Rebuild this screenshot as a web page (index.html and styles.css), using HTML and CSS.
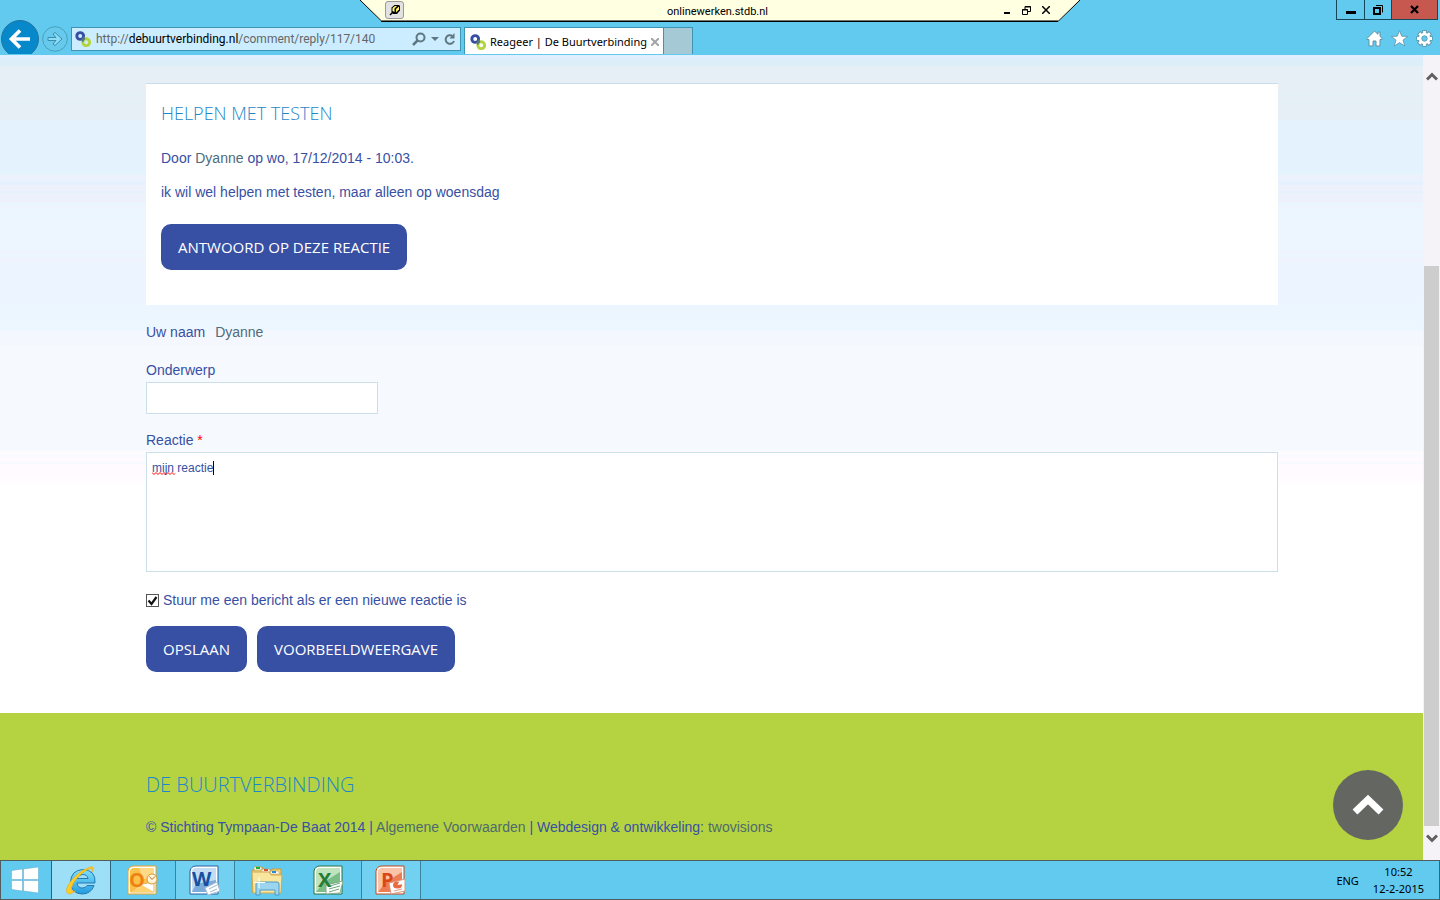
FILE: index.html
```html
<!DOCTYPE html>
<html lang="nl">
<head>
<meta charset="utf-8">
<title>Reageer | De Buurtverbinding</title>
<link rel="stylesheet" href="styles.css">
</head>
<body>
<svg class="defs" aria-hidden="true">
  <symbol id="rings" viewBox="0 0 16 16">
    <circle cx="5.2" cy="5" r="3.4" fill="none" stroke="#354ea4" stroke-width="2.9"/>
    <circle cx="11.2" cy="11.2" r="3.4" fill="none" stroke="#b4d340" stroke-width="2.9"/>
    <path d="M6.7 8.2Q8.8 7.5 8.6 5.5L10 8Q8 8.7 7.8 10.8Z" fill="#567579" stroke="#567579"/>
  </symbol>
</svg>
<div class="desktop">
  <header class="browser">
    <div class="title-row">
      <div class="window-buttons">
        <button class="win" aria-label="Minimaliseren"><svg width="12" height="12"><path d="M1 7h10v3H1z"/></svg></button>
        <button class="win" aria-label="Verkleinen"><svg width="12" height="12"><path d="M2 4h6v6H2z" fill="none" stroke="#000" stroke-width="2"/><path d="M4 1.500h6.500v7" fill="none" stroke="#000"/></svg></button>
        <button class="win win-close" aria-label="Sluiten"><svg width="12" height="12"><path d="M2 2l7 7M9 2l-7 7" stroke="#000" stroke-width="2.300"/></svg></button>
      </div>
    </div>
    <div class="nav-row">
      <button class="back" aria-label="Terug"><svg width="38" height="38" viewBox="0 0 38 38"><circle cx="19" cy="19" r="18.500" fill="#0788cb" stroke="#24739c"/><path d="M29 19H11M19 10.500L10.500 19l8.500 8.500" fill="none" stroke="#fff" stroke-width="3.700"/></svg></button>
      <button class="forward" aria-label="Vooruit"><svg width="26" height="26" viewBox="0 0 26 26"><circle cx="13" cy="13" r="12.300" fill="#67c9eb" stroke="#4a9fbd"/><path d="M6 11.500h8l-3-3.500 2-1.500 7 6.500-7 6.500-2-1.500 3-3.500H6z" fill="#8cdcf5" stroke="#368fb0"/></svg></button>
      <div class="address">
        <svg width="16" height="16"><use href="#rings"/></svg>
        <div class="url" role="textbox" aria-label="Adres">http://<span class="host">debuurtverbinding.nl</span>/comment/reply/117/140</div>
        <button class="tool" aria-label="Zoeken"><svg width="14" height="14"><circle cx="8.500" cy="5.500" r="4" fill="none" stroke="#5f7780" stroke-width="2"/><path d="M5.500 8.500L1 13" stroke="#5f7780" stroke-width="2.500"/></svg></button>
        <button class="tool" aria-label="Adreslijst"><svg width="8" height="5"><path d="M0 0h8L4 4z" fill="#5f7780"/></svg></button>
        <button class="tool" aria-label="Vernieuwen"><svg width="12" height="13"><path d="M8.500 3A4.300 4.300 0 1 0 10 8" fill="none" stroke="#5f7780" stroke-width="2"/><path d="M10.500 0v5.500H5.500z" fill="#5f7780"/></svg></button>
      </div>
      <div class="tab">
        <svg width="16" height="16"><use href="#rings"/></svg>
        <span class="tab-title">Reageer | De Buurtverbinding</span>
        <button class="tool" aria-label="Tabblad sluiten"><svg width="8" height="8"><path d="M0 0l8 8M8 0L0 8" stroke="#a4a4a4" stroke-width="2"/></svg></button>
      </div>
      <button class="new-tab" aria-label="Nieuw tabblad"></button>
      <div class="browser-tools">
        <button class="tool" aria-label="Startpagina"><svg width="17" height="17"><path d="M8.500 1L1 8.500v1h2V16h4v-5h3v5h4V9.500h2v-1L14 6V2h-2v2.300z" fill="#fff" stroke="#5f92a5"/></svg></button>
        <button class="tool" aria-label="Favorieten"><svg width="17" height="17"><path d="M8.500 .500l2.200 5.700 6 .200-4.700 3.700 1.700 5.900-5.200-3.400L3.300 16 5 10.100.3 6.400l6-.2z" fill="#fff" stroke="#5f92a5" stroke-width=".8"/></svg></button>
        <button class="tool" aria-label="Extra"><svg width="17" height="17" viewBox="0 0 17 17"><g stroke="#5f92a5" stroke-width="4.400"><path d="M8.500 .300v16.400M.300 8.500h16.400M2.600 2.600l11.800 11.800M14.400 2.600L2.600 14.400"/></g><g stroke="#fff" stroke-width="2.800"><path d="M8.500 1v15M1 8.500h15M3.200 3.200l10.600 10.600M13.800 3.200L3.200 13.800"/></g><circle cx="8.500" cy="8.500" r="4.200" fill="#62caef" stroke="#fff" stroke-width="3"/><circle cx="8.500" cy="8.500" r="2.700" fill="#62caef" stroke="#5f92a5" stroke-width=".8"/></svg></button>
      </div>
    </div>
    <div class="remote">
      <svg class="remote-shape" viewBox="0 0 720 22" preserveAspectRatio="none"><path d="M0 0h720l-21 21H21z" fill="#ffffe1"/><path d="M0 0l21.500 21M698.500 21L720 0" fill="none" stroke="#000"/><path d="M21 20.500h678" stroke="#77776b"/><path d="M21 21.500h677" stroke="#000"/></svg>
      <button class="pin" aria-label="Vastzetten"><svg width="12" height="12"><path d="M2.500 3.500l3-2.500H10l1 1v4.500L8 10H4L2.500 8z" fill="#000"/><path d="M3.500 4l2.500-2h2L5.500 4.500V8l-2-1z" fill="#fffc72"/><path d="M7 5l3-2.500v3L7 8.500z" fill="#fff36a"/><path d="M1 11l3-3" stroke="#000" stroke-width="1.500"/></svg></button>
      <span class="remote-name">onlinewerken.stdb.nl</span>
      <div class="remote-tools">
        <button class="tool" aria-label="Minimaliseer sessie"><svg width="8" height="8"><path d="M1 6h6v2H1z"/></svg></button>
        <button class="tool" aria-label="Herstel sessie"><svg width="9" height="9"><path d="M3 3V.500h5.500v5H6M3 1h6M.500 3.500h5v5h-5zM0 4h6" fill="none" stroke="#000"/></svg></button>
        <button class="tool" aria-label="Sluit sessie"><svg width="8" height="8"><path d="M0 0l8 8M8 0L0 8" stroke="#000" stroke-width="1.500"/></svg></button>
      </div>
    </div>
  </header>

  <div class="viewport">
    <div class="page">
      <main class="content">
        <article class="comment">
          <h2 class="comment-title">Helpen met testen</h2>
          <p class="line">Door <a class="soft" href="#">Dyanne</a> op wo, 17/12/2014 - 10:03.</p>
          <p class="line">ik wil wel helpen met testen, maar alleen op woensdag</p>
          <button class="action">Antwoord op deze reactie</button>
        </article>
        <form class="reply">
          <p class="name"><span>Uw naam</span><a class="soft" href="#">Dyanne</a></p>
          <div class="field">
            <label for="subject">Onderwerp</label>
            <input class="subject" id="subject" type="text">
          </div>
          <div class="field">
            <label for="body">Reactie <span class="required">*</span></label>
            <div class="editor">
              <textarea class="body" id="body" spellcheck="false">mijn reactie</textarea>
              <svg class="squiggle" width="25" height="3"><path d="M0 .500l2 2 2-2 2 2 2-2 2 2 2-2 2 2 2-2 2 2 2-2 2 2 1-1" fill="none" stroke="#f00"/></svg>
              <span class="caret"></span>
            </div>
          </div>
          <label class="notify"><span class="tick"><input class="box" type="checkbox" checked><svg class="mark" width="13" height="13"><path d="M2.500 6.500l3 3.500 5-7" fill="none" stroke="#111" stroke-width="2.200"/></svg></span>Stuur me een bericht als er een nieuwe reactie is</label>
          <div class="actions">
            <button class="action" type="button">Opslaan</button>
            <button class="action" type="button">Voorbeeldweergave</button>
          </div>
        </form>
      </main>
      <footer class="footer">
        <h2 class="footer-title">De Buurtverbinding</h2>
        <p class="line">© Stichting Tympaan-De Baat 2014 | <a class="soft" href="#">Algemene Voorwaarden</a> | Webdesign &amp; ontwikkeling: <a class="soft" href="#">twovisions</a></p>
        <button class="to-top" aria-label="Naar boven"><svg width="32" height="22"><path d="M3 18L16 5.500 29 18" fill="none" stroke="#fff" stroke-width="7"/></svg></button>
      </footer>
    </div>
    <div class="scrollbar">
      <button class="tool" aria-label="Omhoog"><svg width="12" height="10"><path d="M1 8.500l5-5 5 5" fill="none" stroke="#606060" stroke-width="3"/></svg></button>
      <div class="track"><div class="thumb"></div></div>
      <button class="tool" aria-label="Omlaag"><svg width="12" height="10"><path d="M1 1.500l5 5 5-5" fill="none" stroke="#606060" stroke-width="3"/></svg></button>
    </div>
  </div>

  <nav class="taskbar">
    <button class="start" aria-label="Start"><svg width="28" height="28"><path d="M.500 4.500L11.500 3v10.500H.500zM12.500 3L27.500 1v12.500h-15zM.500 14.500h11V25L.500 23.500zM12.500 14.500h15V27l-15-2z" fill="#fff" stroke="#58a9c9" stroke-width=".5"/></svg></button>
    <button class="app app-active" aria-label="Internet Explorer"><svg width="32" height="32"><defs><linearGradient id="ie" x2="0" y2="1"><stop stop-color="#83e0fa"/><stop offset="1" stop-color="#229bdd"/></linearGradient></defs><path d="M30 19H12q.500 5 5.500 5 3 0 4.500-2.500h7Q26 30 17 30 6 29.500 5.500 18 6 6.500 17.500 5.500 31 6 30 19zM12 14.500h11Q22.500 10.500 17.500 10.500q-4.500 0-5.500 4z" fill="url(#ie)" stroke="#2479b5"/><path d="M27 8c3-6 0-6-4-4C12 8 2 20 1.500 26c0 6 5 4 9 1-5 1-5-2-2-8C13 12 20 6 26 4.500q2 0 1 3.500z" fill="#ffcb26" stroke="#e6a817" stroke-width=".6"/></svg></button>
    <button class="app" aria-label="Outlook"><svg width="32" height="32" viewBox="1 0 32 32"><path d="M2 7q1-5 6-5h22v28H2z" fill="#fff" stroke="#e9a21e"/><path d="M4 8q0-4 4-4h20v24H4z" fill="#fcc14a"/><path d="M13 4h15v10L17 15z" fill="#ffda86"/><path d="M5 28l11-8 12-2v10z" fill="#fff" stroke="#edb44c"/><path d="M5 28l11-7 12 7z" fill="#ffd270"/><text x="3" y="23" class="letter letter-o">O</text><circle cx="26" cy="15" r="5" fill="#fff5dc" stroke="#d59735"/><path d="M23.500 12.500l2.500 3 3-3" fill="none" stroke="#b57423"/></svg></button>
    <button class="app app-open" aria-label="Word"><svg width="32" height="32" viewBox="1 0 32 32"><path d="M2 7q1-5 6-5h22v28H2z" fill="#fff" stroke="#2b5fa2"/><path d="M4 8q0-4 4-4h20v24H4z" fill="#c2dcf3"/><path d="M4 28l4-8 20-4v12z" fill="#7babda"/><path d="M17 24l12-6 3 9-12 4z" fill="#fff" stroke="#a8bdd1"/><path d="M21 25l8-4M22 28l7-3" stroke="#9bb6d2"/><text x="4" y="22" class="letter letter-w">W</text></svg></button>
    <button class="app" aria-label="Verkenner"><svg width="34" height="32"><path d="M2 28V6h3V3h7l2 3h8V5h9v23z" fill="#f0d37a" stroke="#c69c42"/><path d="M4 6V3h7l2 3zM11 8V5h8l2 3zM20 10V7h8l2 3z" fill="#fff" stroke="#b99a55" stroke-width=".6"/><path d="M6 3h4v2H6z" fill="#15b535"/><path d="M14 5h4v2h-4z" fill="#e04e2b"/><path d="M22 7h4v2h-4z" fill="#268bd9"/><path d="M2 8h17l2 3h11l-1 18H3z" fill="#f9e69e" stroke="#d1a94f"/><path d="M6 31V20q0-2 2-2h19q2 0 2 2v11h-4v-5H10v5z" fill="#9cd5ef" stroke="#4e9cc5"/><path d="M9 13v11M4 18.500h11" stroke="#fff"/></svg></button>
    <button class="app" aria-label="Excel"><svg width="32" height="32" viewBox="1 0 32 32"><path d="M2 7q1-5 6-5h22v28H2z" fill="#fff" stroke="#24743e"/><path d="M4 8q0-4 4-4h20v24H4z" fill="#bfe3bd"/><path d="M4 28l8-10L28 8v20z" fill="#7abd85"/><path d="M14 21l17-4-3 12-14 1z" fill="#fff" stroke="#81aa87"/><path d="M18 22l10-3M17 25l11-3M17 28l10-3" stroke="#6ca878"/><text x="6" y="23" class="letter letter-x">X</text></svg></button>
    <button class="app app-open" aria-label="PowerPoint"><svg width="32" height="32" viewBox="1 0 32 32"><path d="M2 7q1-5 6-5h22v28H2z" fill="#fff" stroke="#c54519"/><path d="M4 8q0-4 4-4h20v24H4z" fill="#f9c3aa"/><path d="M4 28l8-10L28 8v20z" fill="#ee7c52"/><path d="M15 19l16-4v12l-14 3z" fill="#fff" stroke="#d9957c"/><ellipse cx="23.500" cy="21" rx="4.500" ry="3.500" fill="#e96a43"/><path d="M23.500 21l2-4 4 3z" fill="#fff"/><path d="M20 27l8-2" stroke="#dd9c83"/><text x="7" y="23" class="letter letter-p">P</text></svg></button>
    <div class="tray"><span>ENG</span><time class="clock">10:52<br>12-2-2015</time></div>
  </nav>
</div>
</body>
</html>
```

FILE: styles.css
```css
* { box-sizing: border-box; }
body { margin: 0; background: #fff; color: #3850a3; font: 14px/20px "Liberation Sans", Arial, sans-serif; }
h2, p { margin: 0; }
button { padding: 0; border: 0; background: none; font: inherit; color: inherit; }
svg { display: block; flex: none; }
.defs { position: absolute; width: 0; height: 0; }
.desktop { display: flex; flex-direction: column; height: 100vh; overflow: hidden; }
.tool { display: flex; align-items: center; justify-content: center; }

/* Browser frame */
.browser { position: relative; flex: none; height: 55px; overflow: hidden; background: #62caef; color: #000; font: 12px/16px "Noto Sans", "Open Sans", sans-serif; }
.title-row { display: flex; justify-content: flex-end; height: 20px; padding-right: 2px; }
.window-buttons { display: flex; border: 1px solid #17475a; border-top: 0; }
.win { display: flex; align-items: center; justify-content: center; width: 27px; }
.win + .win { border-left: 1px solid #17475a; }
.win-close { width: 46px; background: #c75850; }
.nav-row { display: flex; align-items: flex-start; height: 34px; padding-left: 1px; overflow: hidden; }
.forward { margin: 6px 3px 0; }
.address { display: flex; align-items: center; width: 390px; height: 24px; margin: 7px 3px 0 0; padding: 0 4px 0 3px; gap: 5px; border: 1px solid #3e94b2; background: #cbedff; }
.url { flex: 1; color: #666; white-space: nowrap; font: 12px/16px Roboto, sans-serif; }
.host { color: #000; }
.tab { display: flex; align-items: center; width: 200px; height: 28px; margin-top: 7px; padding: 0 6px 0 5px; gap: 4px; border: 1px solid #3e94b2; border-bottom: 0; background: #fff; }
.tab-title { flex: 1; white-space: nowrap; font-size: 11px; }
.new-tab { width: 29px; height: 28px; margin-top: 7px; border: 1px solid #3e94b2; border-width: 1px 1px 0 0; background: #a5cad6; }
.browser-tools { display: flex; gap: 8px; margin: 10px 7px 0 auto; }

.remote { position: absolute; top: 0; left: 25%; width: 50%; height: 22px; display: grid; grid-template-columns: 1fr auto 1fr; align-items: center; padding: 0 30px 4px 25px; font: 11px/16px Roboto, sans-serif; }
.remote-shape { position: absolute; inset: 0; width: 100%; height: 22px; }
.pin { position: relative; display: flex; align-items: center; justify-content: center; width: 19px; height: 18px; border: 1px solid #999; border-radius: 3px; background: #e2e2e2; }
.remote-name { position: relative; padding-top: 4px; }
.remote-tools { position: relative; display: flex; justify-content: flex-end; gap: 11px; }

/* Web page */
.viewport { display: flex; flex: 1; min-height: 0; }
.page { display: flex; flex-direction: column; flex: 1; background: linear-gradient(#e0effe 0 4px, #dceef8 4px 11px, #e6eef6 11px 38px, #e4f0f6 38px 41px, #e6eef6 41px 46px, #e4f0f6 46px 50px, #e6eef6 50px 65px, #e4f2fe 65px 110px, #e5f3fd 120px, #ebf2fd 120px 126px, #e5f1fd 126px 130px, #edf1fc 130px 136px, #e6f1fe 136px 138px, #edf1fc 138px 148px, #eaf6ff 148px 151px, #eef3fe 151px 153px, #ecf6ff 153px 168px, #eef3fe 168px 170px, #edf6ff 170px 196px, #eef3fe 196px 199px, #edf6ff 199px 202px, #eef3fe 202px 207px, #ecf5ff 207px 240px, #ecf7ff 276px, #f5f7fe 276px 291px, #f6faff 291px 396px, #fefbff 396px 400px, #f8faff 400px 402px, #fefaff 402px 407px, #f8faff 407px 409px, #fffaff 409px 423px, #fff 430px); }
.content { flex: 1; padding: 28px 145px 0 146px; }
.comment { padding: 17px 15px 35px; border-top: 1px solid #ccdde9; background: #fff; }
.comment-title, .footer-title { font-family: "Open Sans", sans-serif; font-weight: 300; text-transform: uppercase; color: #1d87c9; }
.comment-title { margin-bottom: 23px; font-size: 18px; line-height: 24px; }
.comment .line { margin-bottom: 14px; }
.comment .action { margin-top: 22px; }
.soft { color: #4e6c7b; text-decoration: none; }
.action { display: block; height: 46px; padding: 0 17px; border-radius: 10px; background: #3850a3; color: #fff; font: 15px/20px "Open Sans", sans-serif; text-transform: uppercase; }
.reply { display: flex; flex-direction: column; gap: 16px; padding-top: 17px; }
.name { display: flex; gap: 10px; margin-bottom: 2px; }
.field { display: flex; flex-direction: column; gap: 2px; }
.required { color: #f00; }
.subject { width: 232px; height: 32px; border: 1px solid #cce0eb; background: #fff; }
.editor { position: relative; display: flex; margin-bottom: 2px; }
.body { flex: 1; height: 120px; padding: 7px 5px; border: 1px solid #cce0eb; background: #fff; color: #3850a3; font: 12px/16px "Liberation Sans", Arial, sans-serif; resize: none; outline: 0; }
.squiggle { position: absolute; left: 6px; top: 20px; }
.caret { position: absolute; left: 67px; top: 9px; width: 1px; height: 14px; background: #000; }
.notify { display: flex; align-items: center; gap: 4px; }
.tick { display: grid; }
.box, .mark { grid-area: 1 / 1; }
.box { appearance: none; width: 13px; height: 13px; margin: 0; border: 1px solid #555; background: #fff; }
.mark { pointer-events: none; }
.actions { display: flex; gap: 10px; }
.footer { position: relative; flex: none; min-height: 147px; padding: 58px 145px 0 146px; background: #b5d341; }
.footer-title { margin-bottom: 18px; font-size: 20px; line-height: 28px; }
.footer .soft { color: #4e6b6b; }
.to-top { position: absolute; right: 20px; bottom: 20px; display: flex; align-items: center; justify-content: center; width: 70px; height: 70px; border-radius: 50%; background: #646661; }
.scrollbar { display: flex; flex-direction: column; flex: none; width: 17px; background: #f6f3f8; }
.scrollbar .tool { height: 34px; padding-top: 8px; }
.scrollbar .tool:last-child { padding: 0 0 8px; }
.track { display: flex; flex: 1; flex-direction: column; justify-content: flex-end; padding-left: 1px; }
.thumb { height: 76%; margin-right: 1px; background: #cdcdcd; }

/* Taskbar */
.taskbar { display: flex; flex: none; gap: 2px; height: 40px; border: 1px solid #515c61; background: #62caef; color: #000; font: 12px/17px "Noto Sans", "Open Sans", sans-serif; }
.start { display: flex; align-items: center; justify-content: center; width: 48px; }
.app { display: flex; align-items: center; justify-content: center; width: 60px; }
.app svg { overflow: visible; }
.app-active { border: 1px solid #28647a; border-width: 0 1px; background: #9edff8; }
.app-open { border: 1px solid #3a839f; border-width: 0 1px; background: #72d0f0; }
.tray { display: flex; align-items: center; gap: 14px; margin-left: auto; padding-right: 15px; font-size: 11px; }
.clock { text-align: center; }
.letter { font: bold 20px/20px "Open Sans", sans-serif; }
.letter-o { fill: #ed8214; }
.letter-w { fill: #174fa0; }
.letter-x { fill: #267b36; }
.letter-p { fill: #d94717; }
```
